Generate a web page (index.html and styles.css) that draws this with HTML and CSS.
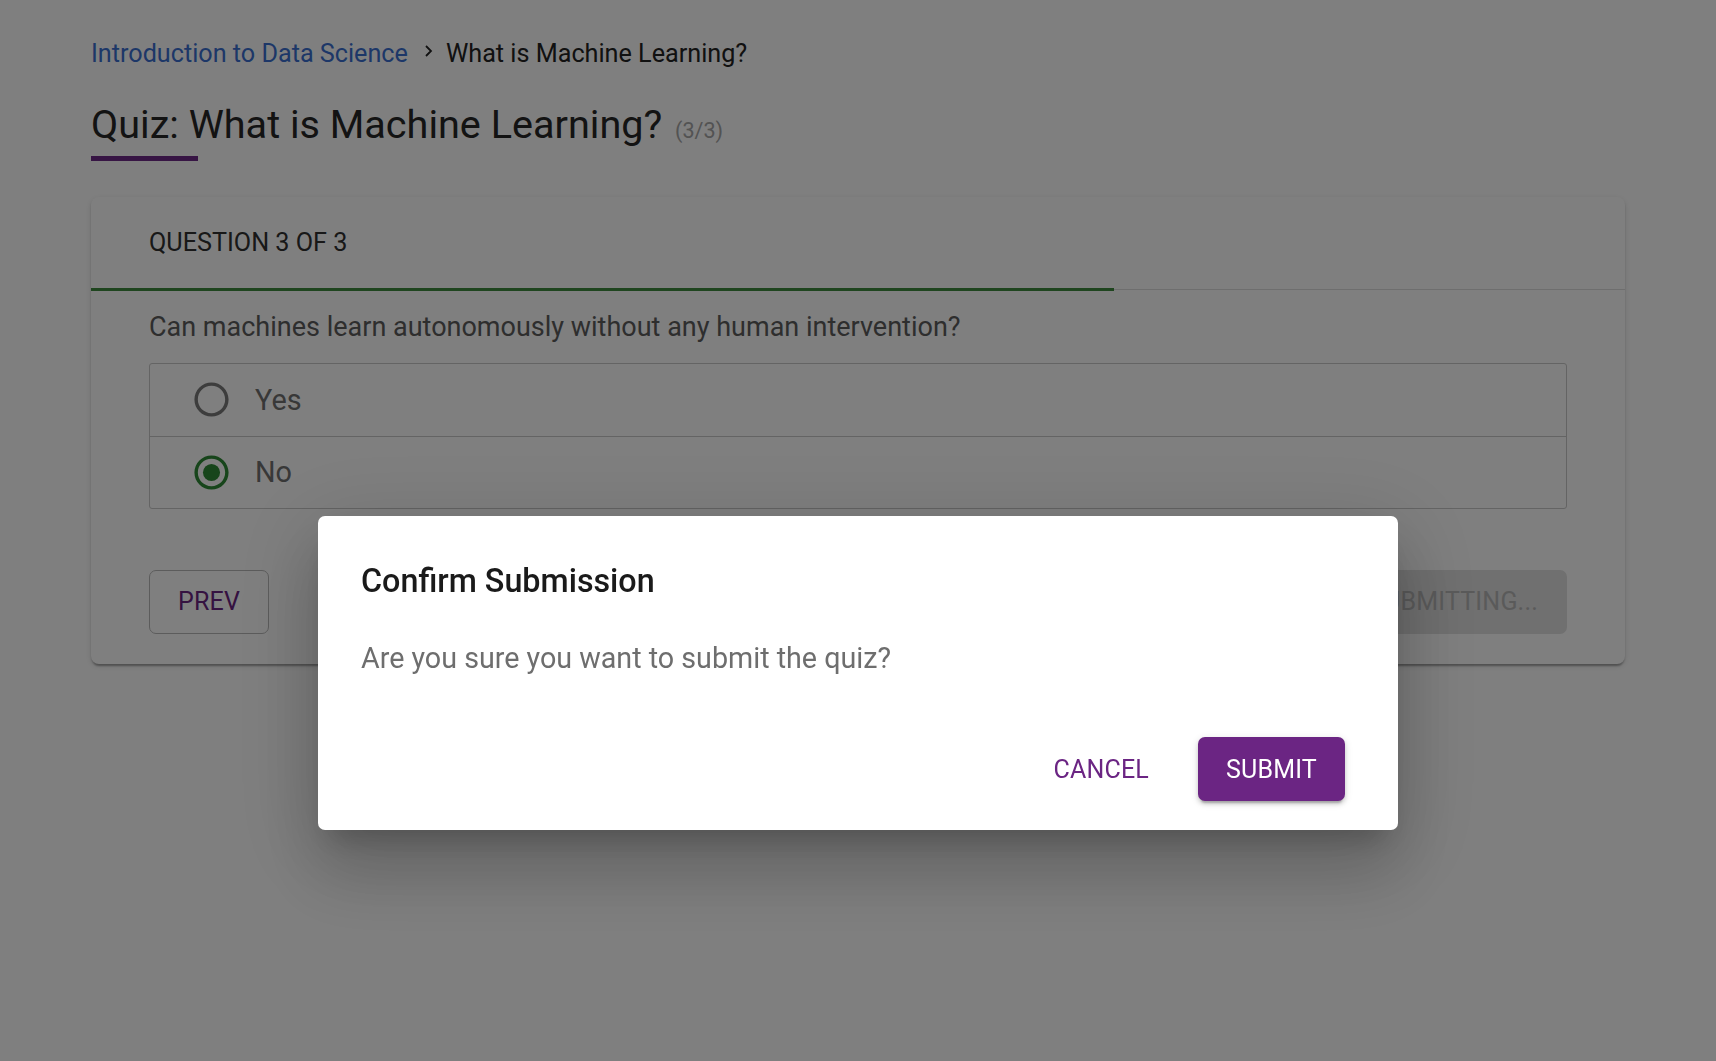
FILE: index.html
```html
<!DOCTYPE html>
<html lang="en">
<head>
<meta charset="utf-8">
<title>Quiz: What is Machine Learning?</title>
<link rel="stylesheet" href="styles.css">
</head>
<body>
<div class="page">
  <nav class="breadcrumb">
    <a class="crumb-link" href="#">Introduction to Data Science</a>
    <svg class="crumb-sep" viewBox="0 0 10 14" width="10" height="14"><polyline points="3,2 8,7 3,12" fill="none" stroke="currentColor" stroke-width="1.8"/></svg>
    <span class="crumb-current">What is Machine Learning?</span>
  </nav>

  <header class="title-block">
    <h1 class="title">Quiz: What is Machine Learning? <span class="title-count">(3/3)</span></h1>
    <div class="title-underline"></div>
  </header>

  <section class="card">
    <div class="card-header">QUESTION 3 OF 3</div>
    <div class="progress"><div class="progress-fill" style="width: 66.67%"></div></div>
    <div class="card-body">
      <p class="question">Can machines learn autonomously without any human intervention?</p>
      <div class="options">
        <label class="option">
          <svg class="radio" viewBox="0 0 24 24"><path fill="currentColor" d="M12 2C6.48 2 2 6.480 2 12s4.48 10 10 10 10-4.48 10-10S17.52 2 12 2zm0 18c-4.42 0-8-3.58-8-8s3.58-8 8-8 8 3.58 8 8-3.58 8-8 8z"/></svg>
          <span class="option-label">Yes</span>
        </label>
        <label class="option">
          <svg class="radio radio-checked" viewBox="0 0 24 24"><path fill="currentColor" d="M12 2C6.48 2 2 6.48 2 12s4.48 10 10 10 10-4.48 10-10S17.52 2 12 2zm0 18c-4.42 0-8-3.58-8-8s3.58-8 8-8 8 3.58 8 8-3.58 8-8 8z"/><circle cx="12" cy="12" r="5" fill="currentColor"/></svg>
          <span class="option-label">No</span>
        </label>
      </div>
      <div class="actions">
        <button class="btn btn-outlined">PREV</button>
        <button class="btn btn-disabled" disabled>SUBMITTING...</button>
      </div>
    </div>
  </section>
</div>

<div class="backdrop">
  <div class="dialog" role="dialog" aria-labelledby="dlg-title">
    <h2 class="dialog-title" id="dlg-title">Confirm Submission</h2>
    <p class="dialog-text">Are you sure you want to submit the quiz?</p>
    <div class="dialog-actions">
      <button class="btn btn-text">CANCEL</button>
      <button class="btn btn-contained">SUBMIT</button>
    </div>
  </div>
</div>
</body>
</html>
```

FILE: styles.css
```css
* { box-sizing: border-box; }

html, body {
  margin: 0;
  padding: 0;
  background: #ffffff;
  font-family: Roboto, "Noto Sans", "Liberation Sans", sans-serif;
  color: rgba(0, 0, 0, 0.87);
}

.page {
  padding: 35px 91px 40px;
}

/* breadcrumb */
.breadcrumb {
  display: flex;
  align-items: center;
  font-size: 25.2px;
  line-height: 1.5;
}
.crumb-link {
  color: #3a6fd0;
  text-decoration: none;
}
.crumb-sep {
  color: #222;
  margin: 0 13px 0 15px;
  position: relative;
  top: -3px;
}
.crumb-current {
  color: #222;
}

/* title */
.title-block {
  margin-top: 28.5px;
}
.title {
  margin: 0;
  font-size: 39.6px;
  font-weight: 400;
  line-height: 48px;
  color: #262626;
}
.title-count {
  font-size: 21.6px;
  color: #a6a6a6;
  margin-left: 3px;
}
.title-underline {
  margin-top: 1px;
  width: 107px;
  height: 5px;
  background: #6f2a88;
}

/* card */
.card {
  margin-top: 36px;
  background: #fff;
  border-radius: 8px;
  box-shadow: 0 4px 2px -2px rgba(0,0,0,0.2), 0 2px 2px 0 rgba(0,0,0,0.14), 0 2px 6px 0 rgba(0,0,0,0.12);
  overflow: hidden;
}
.card-header {
  height: 91px;
  display: flex;
  align-items: center;
  padding: 0 58px;
  font-size: 25.2px;
  color: #303030;
}
.progress {
  height: 3px;
  background: linear-gradient(#dcdcdc, #dcdcdc) center / 100% 1px no-repeat;
}
.progress-fill {
  height: 3px;
  background: #3f8a3f;
}
.card-body {
  padding: 16px 58px 30px;
}
.question {
  margin: 0;
  font-size: 27px;
  line-height: 40.5px;
  color: #5c5c5c;
}
.options {
  margin-top: 15px;
  border: 1px solid #c8c8c8;
  border-radius: 3px;
}
.option {
  display: flex;
  align-items: center;
  gap: 23px;
  height: 72px;
  padding-left: 41px;
}
.option + .option {
  border-top: 1px solid #c8c8c8;
}
.radio {
  width: 41px;
  height: 41px;
  color: #7a7a7a;
}
.radio-checked {
  color: #2f8a36;
}
.option-label {
  font-size: 28.8px;
  color: #707070;
}
.actions {
  margin-top: 61px;
  display: flex;
  justify-content: space-between;
}

/* buttons */
.btn {
  font-family: inherit;
  font-size: 25px;
  font-weight: 400;
  letter-spacing: 0.2px;
  height: 64px;
  padding: 0 29px;
  border-radius: 7px;
  border: none;
  background: transparent;
  cursor: pointer;
}
.btn-outlined {
  border: 1px solid #b9b9b9;
  color: #6b2583;
  padding: 0 28px;
}
.btn-disabled {
  background: #e0e0e0;
  color: #b5b5b5;
  cursor: default;
}
.btn-text {
  color: #6b2583;
  padding: 0 20px;
}
.btn-contained {
  background: #6b2583;
  color: #fff;
  padding: 0 28px;
  box-shadow: 0 5px 2px -3px rgba(0,0,0,0.2), 0 3px 4px 0 rgba(0,0,0,0.14), 0 2px 9px 0 rgba(0,0,0,0.12);
}

/* dialog */
.backdrop {
  position: fixed;
  inset: 0;
  background: rgba(0, 0, 0, 0.5);
  display: flex;
  justify-content: center;
  align-items: flex-start;
  padding-top: 516px;
}
.dialog {
  width: 1080px;
  background: #fff;
  border-radius: 7px;
  padding: 40px 53px 29px 43px;
  box-shadow: 0 20px 27px -12px rgba(0,0,0,0.2), 0 43px 68px 5px rgba(0,0,0,0.14), 0 16px 83px 14px rgba(0,0,0,0.12);
}
.dialog-title {
  margin: 0;
  font-size: 32.3px;
  font-weight: 500;
  line-height: 51px;
  color: #1a1a1a;
}
.dialog-text {
  margin: 30px 0 0;
  font-size: 28.7px;
  line-height: 43px;
  color: #6e6e6e;
}
.dialog-actions {
  margin-top: 57px;
  display: flex;
  justify-content: flex-end;
  gap: 29px;
}
```
